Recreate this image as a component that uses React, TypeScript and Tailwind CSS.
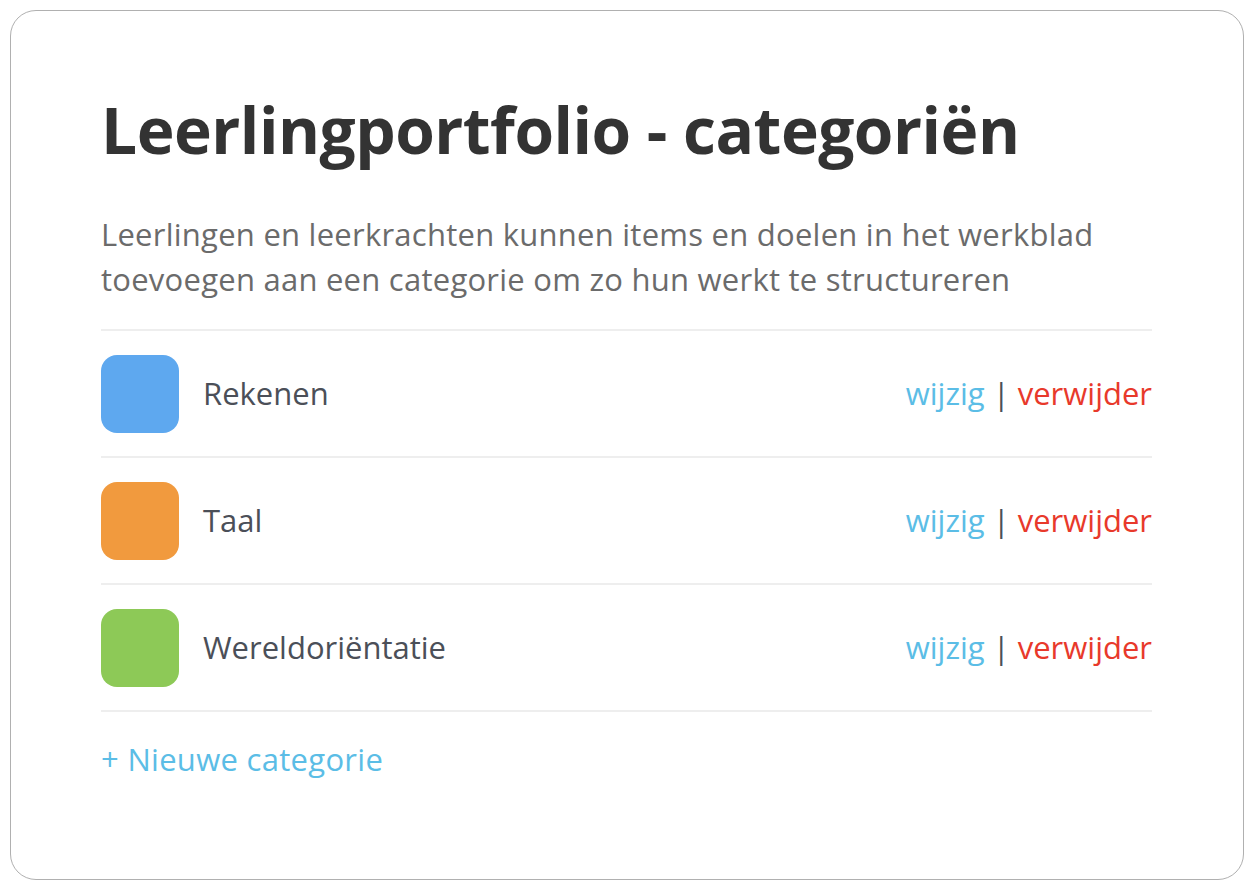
const categories = [
  { name: 'Rekenen', color: 'bg-[#5ea8ef]' },
  { name: 'Taal', color: 'bg-[#f19a3e]' },
  { name: 'Wereldoriëntatie', color: 'bg-[#8dc957]' },
]

export default function App() {
  return (
    <div className="w-[1254px] h-[890px] bg-white p-[10px] font-['Open_Sans',sans-serif]">
      <div className="h-full rounded-[26px] border-[1.5px] border-[#b0b0b0] bg-white pl-[90px] pr-[91px] pt-[83px]">
        <h1 className="text-[64px] leading-[72px] font-bold text-[#333333] tracking-[-0.5px]">
          Leerlingportfolio - categoriën
        </h1>
        <p className="mt-[46px] text-[31px] leading-[45px] text-[#6b6b6b] tracking-[0.25px]">
          Leerlingen en leerkrachten kunnen items en doelen in het werkblad toevoegen aan een categorie om zo hun werkt te structureren
        </p>
        <div className="mt-[27px] border-t-2 border-[#eeeeee]">
          {categories.map((c) => (
            <div key={c.name} className="flex items-center py-[23.5px] border-b-2 border-[#eeeeee]">
              <div className={`w-[78px] h-[78px] rounded-[16px] ${c.color}`} />
              <span className="ml-[24px] text-[31px] text-[#4b4f58]">{c.name}</span>
              <div className="ml-auto text-[31px]">
                <a href="#" className="text-[#5bbde6]">wijzig</a>
                <span className="text-[#4b4f58]"> | </span>
                <a href="#" className="text-[#e8392b]">verwijder</a>
              </div>
            </div>
          ))}
        </div>
        <a href="#" className="block mt-[24px] text-[31px] text-[#5bbde6] tracking-[0.3px]">
          + Nieuwe categorie
        </a>
      </div>
    </div>
  )
}
